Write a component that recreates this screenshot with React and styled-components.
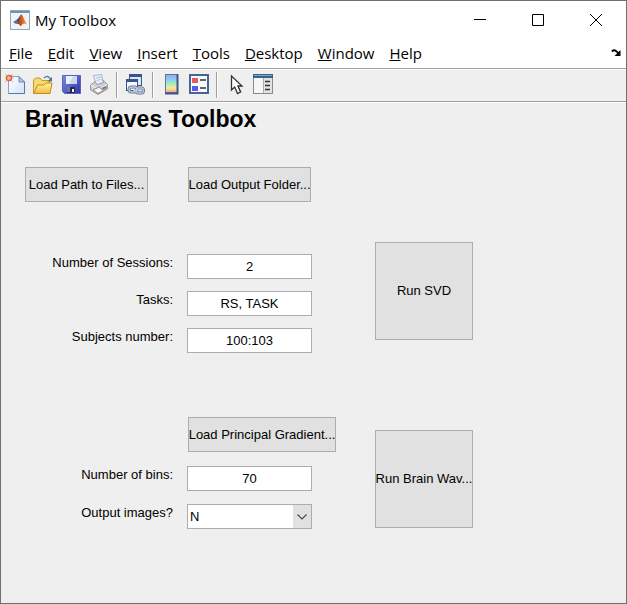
import React from "react";
import styled, { createGlobalStyle } from "styled-components";

const GlobalStyle = createGlobalStyle`
  *, *::before, *::after { box-sizing: border-box; }
  body { margin: 0; background: #efefef; }
`;

const Window = styled.div`
  display: flex;
  flex-direction: column;
  min-height: 100vh;
  border: 1px solid #707070;
  background: #efefef;
  color: #000;
  font: 13px/18px "Liberation Sans", Arial, sans-serif;
`;

const TitleBar = styled.header`
  display: flex;
  align-items: center;
  height: 37px;
  padding: 0 1px 0 9px;
  background: #fff;
`;

const TitleText = styled.span`
  flex: 1;
  padding-left: 5px;
  font: 15px/20px "Open Sans", sans-serif;
`;

const WindowButton = styled.button`
  display: flex;
  align-items: center;
  justify-content: center;
  width: 58px;
  height: 36px;
  padding: 0;
  border: 0;
  background: none;
`;

const MenuBar = styled.nav`
  display: flex;
  align-items: center;
  gap: 15px;
  height: 30px;
  padding: 0 4px 0 8px;
  background: #fff;
`;

const MenuButton = styled.button`
  padding: 0;
  border: 0;
  background: none;
  color: inherit;
  font: 15px/20px "Open Sans", sans-serif;

  &::first-letter {
    text-decoration: underline;
    text-decoration-thickness: 1px;
    text-underline-offset: 1px;
  }
`;

const DockButton = styled.button`
  display: flex;
  margin-left: auto;
  padding: 0;
  border: 0;
  background: none;
`;

const ToolBar = styled.div`
  display: flex;
  align-items: center;
  gap: 7px;
  height: 34px;
  padding: 0 4px;
  border-top: 1px solid #a0a0a0;
  border-bottom: 1px solid #a0a0a0;
  box-shadow: inset 0 1px #fff, 0 1px #fff;
`;

const ToolGroup = styled.div`
  display: flex;
  gap: 8px;
`;

const ToolButton = styled.button`
  display: flex;
  width: 20px;
  height: 22px;
  padding: 0;
  border: 0;
  background: none;
`;

const Separator = styled.div`
  width: 2px;
  height: 26px;
  border-left: 1px solid #a0a0a0;
  border-right: 1px solid #fff;
`;

const Content = styled.main`
  flex: 1;
  padding: 1px 24px 24px;
`;

const Heading = styled.h1`
  margin: 0;
  font-size: 23px;
  line-height: 32px;
`;

const ButtonRow = styled.div`
  display: flex;
  gap: 40px;
  margin-top: 32px;
`;

const PushButton = styled.button`
  display: flex;
  align-items: center;
  justify-content: center;
  width: ${(p) => p.$width}px;
  height: ${(p) => p.$height || 35}px;
  padding: 0;
  border: 1px solid #adadad;
  background: #e1e1e1;
  color: inherit;
  font: inherit;
  white-space: nowrap;
`;

const Section = styled.section`
  display: grid;
  grid-template-columns: 350px 98px;
  margin-top: ${(p) => p.$top}px;
`;

const Fields = styled.div`
  display: grid;
  grid-template-columns: 148px 125px;
  gap: ${(p) => p.$gap}px 14px;
  align-content: start;
  padding-top: ${(p) => p.$top}px;
`;

const Label = styled.label`
  text-align: right;
`;

const TextField = styled.input`
  width: 100%;
  height: 25px;
  padding: 0;
  border: 1px solid #abadb3;
  border-radius: 0;
  background: #fff;
  color: inherit;
  font: inherit;
  text-align: center;
`;

const SelectBox = styled.div`
  display: grid;
  grid-template-columns: 1fr 18px;
  height: 25px;
  border: 1px solid #adadad;
  background: #fff;
`;

const Select = styled.select`
  grid-area: 1 / 1 / 2 / 3;
  appearance: none;
  padding: 0 2px;
  border: 0;
  border-radius: 0;
  background: none;
  color: inherit;
  font: inherit;
`;

const SelectArrow = styled.span`
  grid-area: 1 / 2;
  display: flex;
  align-items: center;
  justify-content: center;
  background: #e1e1e1;
  pointer-events: none;
`;

const OffsetRow = styled.div`
  padding-left: 163px;
`;

const RunCell = styled.div`
  padding-top: ${(p) => p.$top}px;
`;

const Icon = ({ w = 20, h = 22, children }) => (
  <svg width={w} height={h} viewBox={`0 0 ${w} ${h}`} aria-hidden="true">
    {children}
  </svg>
);

const MatlabIcon = () => (
  <Icon h={20}>
    <defs>
      <linearGradient id="peak" x1="0" x2="1">
        <stop offset="0" stopColor="#7a2a14" />
        <stop offset=".45" stopColor="#d8521c" />
        <stop offset="1" stopColor="#f0a040" />
      </linearGradient>
    </defs>
    <rect x=".5" y=".5" width="19" height="19" fill="#f1f4f7" stroke="#96a3b1" />
    <rect x="1" y="1" width="18" height="2" fill="#6f94b8" />
    <path d="M3 12 L7 9.5 L9 11 L6 14Z" fill="#3b78b8" />
    <path d="M7 9.5 C9 8.5 10 4.5 11.5 4.5 L9.5 11 L8 13Z" fill="#235083" />
    <path d="M11.5 4.5 C13 5 14.5 11 17 14.5 C14.5 12.5 12.5 14 10.5 16.5 C9.5 14.5 8.5 13.5 6 14 C9 12 10 6 11.5 4.5Z" fill="url(#peak)" />
  </Icon>
);

const NewIcon = () => (
  <Icon>
    <defs>
      <linearGradient id="paper" x1="0" y1="0" x2="1" y2="1">
        <stop offset="0" stopColor="#fff" />
        <stop offset="1" stopColor="#cfe3fb" />
      </linearGradient>
    </defs>
    <path d="M3.5 2.5H14L19.5 8V19.5H3.5Z" fill="url(#paper)" stroke="#8ea3cb" />
    <path d="M19.5 8V19.5H3.5" fill="none" stroke="#5d76a6" />
    <path d="M14 2.5V8H19.5Z" fill="#adc9ee" stroke="#6f88b6" />
    <path d="M0 0L8 8M8 0L0 8M0 4H9" stroke="#eda384" />
    <circle cx="4" cy="4" r="2.5" fill="#fbc494" stroke="#db633c" strokeWidth="1.4" />
  </Icon>
);

const OpenIcon = () => (
  <Icon>
    <defs>
      <linearGradient id="folder" x1="0" y1="0" x2="0" y2="1">
        <stop offset="0" stopColor="#fff3a0" />
        <stop offset="1" stopColor="#efbd3e" />
      </linearGradient>
    </defs>
    <path d="M.5 19.5V6L2.5 4H7L9 6.5H16.5V19.5Z" fill="#f6da70" stroke="#c59a2c" />
    <path d="M.8 19.5L4.5 11H11L13 9H19L17 19.5Z" fill="url(#folder)" stroke="#c28c1b" />
    <path d="M11 4C13 1.5 16 2 17.5 5" fill="none" stroke="#6e8296" strokeWidth="1.5" />
    <path d="M19 3V7.5H14.5Z" fill="#586d84" />
  </Icon>
);

const SaveIcon = () => (
  <Icon>
    <defs>
      <linearGradient id="disk" x1="0" y1="0" x2="1" y2="1">
        <stop offset="0" stopColor="#7890e8" />
        <stop offset="1" stopColor="#3032a4" />
      </linearGradient>
    </defs>
    <path d="M1.5 1.5H19.5V19.5H3.5L1.5 17.5Z" fill="url(#disk)" stroke="#5a63b4" />
    <path d="M5 2H16V10H5Z" fill="#e9effc" />
    <path d="M12 2H16V10H8Z" fill="#c9d5f2" />
    <rect x="6" y="13" width="8" height="6" fill="#23275c" />
    <rect x="11" y="15" width="2" height="3" fill="#f1f4ff" />
    <rect x="6" y="13" width="3" height="5" fill="#6f77a8" />
  </Icon>
);

const PrintIcon = () => (
  <Icon>
    <path d="M4.5 1.5L12.5 .5L14.5 9L7.5 11.5Z" fill="#e8f2ff" stroke="#a3b5ca" />
    <path d="M7 4L12 3M7.5 6.5L12.5 5.5" stroke="#a8c3e8" />
    <path d="M1.5 11L6 7.5L8 10.5L14.5 8.5L14 6L18.5 10.5V15L9 20.5L1.5 16Z" fill="#cfcfcf" stroke="#9c9c9c" />
    <path d="M2 11.5L9 15L18 11" fill="none" stroke="#f5f5f5" />
    <path d="M9 15V20L18 15V11.5Z" fill="#ababab" />
    <path d="M4 16L10 13L14.5 16.5L9 19.5Z" fill="#f7f7f7" stroke="#8b8b8b" />
    <path d="M14 14.5L17 13.2" stroke="#727272" strokeWidth="1.4" />
  </Icon>
);

const LinkIcon = () => (
  <Icon>
    <rect x="4.5" y="1.5" width="12" height="10" fill="#dbe7f7" stroke="#39558f" />
    <rect x="4" y="0" width="13" height="3" fill="#36558f" />
    <rect x="1.5" y="6.5" width="11" height="10" fill="#f5f9ff" stroke="#39558f" />
    <rect x="1" y="5" width="12" height="3" fill="#36558f" />
    <g fill="none">
      <rect x="4" y="13" width="8" height="5" rx="2.5" stroke="#5f7389" strokeWidth="3" />
      <rect x="11" y="14" width="7.5" height="5" rx="2.5" stroke="#5f7389" strokeWidth="3" />
      <rect x="4" y="13" width="8" height="5" rx="2.5" stroke="#bccbdc" strokeWidth="1.3" />
      <rect x="11" y="14" width="7.5" height="5" rx="2.5" stroke="#bccbdc" strokeWidth="1.3" />
      <path d="M8 16.2H15" stroke="#bccbdc" strokeWidth="1.5" />
    </g>
  </Icon>
);

const ColorbarIcon = () => (
  <Icon>
    <defs>
      <linearGradient id="spectrum" x1="0" y1="0" x2="0" y2="1">
        <stop offset="0" stopColor="#a3a1ec" />
        <stop offset=".3" stopColor="#83d4ef" />
        <stop offset=".55" stopColor="#b0edb5" />
        <stop offset=".75" stopColor="#f6e995" />
        <stop offset="1" stopColor="#f2a48c" />
      </linearGradient>
    </defs>
    <rect x="4.5" y=".5" width="12" height="18" fill="url(#spectrum)" stroke="#5c75a5" />
    <path d="M16.5 0V19.5H4" fill="none" stroke="#405786" strokeWidth="2" />
  </Icon>
);

const LegendIcon = () => (
  <Icon>
    <rect x="1" y="1" width="18" height="18" fill="#f6f9ff" stroke="#4b6294" strokeWidth="2" />
    <rect x="3" y="4" width="6" height="5" fill="#e75a5a" />
    <rect x="3" y="12" width="6" height="5" fill="#5b5be2" />
    <path d="M11 6H17M11 14H17" stroke="#333" strokeWidth="1.5" />
  </Icon>
);

const PointerIcon = () => (
  <Icon>
    <path d="M6.5 2V16L9.7 13L12.5 19.5L15.5 18L13 12H17Z" fill="#fff" stroke="#333" strokeWidth="1.3" />
    <path d="M13 12L16 18L13 19" fill="none" stroke="#222" strokeDasharray="1 1" />
  </Icon>
);

const InspectorIcon = () => (
  <Icon>
    <rect x=".5" y=".5" width="19" height="19" fill="#e2e2e2" stroke="#8b8b8b" />
    <rect x="0" y="0" width="20" height="4" fill="#396486" />
    <path d="M1 1.5H19" stroke="#7fa7c4" />
    <rect x="1" y="4" width="9" height="15" fill="#f6f6f6" />
    <path d="M10.5 4V19" stroke="#aaa" />
    <path d="M12 7.5H17M12 11.5H17M12 15.5H17" stroke="#333" strokeWidth="1.4" />
  </Icon>
);

const toolGroups = [
  [["New Figure", NewIcon], ["Open File", OpenIcon], ["Save Figure", SaveIcon], ["Print Figure", PrintIcon]],
  [["Link Plot", LinkIcon]],
  [["Insert Colorbar", ColorbarIcon], ["Insert Legend", LegendIcon]],
  [["Edit Plot", PointerIcon], ["Open Property Inspector", InspectorIcon]],
];

const menus = ["File", "Edit", "View", "Insert", "Tools", "Desktop", "Window", "Help"];

const controls = [
  ["Minimize", "M0 5.5H12"],
  ["Maximize", "M.5 .5H11.5V11.5H.5Z"],
  ["Close", "M0 0L12 12M12 0L0 12"],
];

const Field = ({ id, label, value }) => (
  <>
    <Label htmlFor={id}>{label}</Label>
    <TextField id={id} defaultValue={value} />
  </>
);

export default function App() {
  return (
    <>
      <GlobalStyle />
      <Window>
        <TitleBar>
          <MatlabIcon />
          <TitleText>My Toolbox</TitleText>
          {controls.map(([name, d]) => (
            <WindowButton key={name} aria-label={name}>
              <Icon w={12} h={12}>
                <path d={d} fill="none" stroke="#000" />
              </Icon>
            </WindowButton>
          ))}
        </TitleBar>
        <MenuBar>
          {menus.map((m) => (
            <MenuButton key={m}>{m}</MenuButton>
          ))}
          <DockButton aria-label="Dock">
            <Icon w={11} h={8}>
              <path d="M1 2.5C3 .5 5 1 7.5 4.5" fill="none" stroke="#000" strokeWidth="2" />
              <path d="M9.5 1V7H3.5Z" />
            </Icon>
          </DockButton>
        </MenuBar>
        <ToolBar role="toolbar">
          {toolGroups.map((group, i) => (
            <React.Fragment key={i}>
              {i > 0 && <Separator />}
              <ToolGroup>
                {group.map(([name, Glyph]) => (
                  <ToolButton key={name} aria-label={name}>
                    <Glyph />
                  </ToolButton>
                ))}
              </ToolGroup>
            </React.Fragment>
          ))}
        </ToolBar>
        <Content>
          <Heading>Brain Waves Toolbox</Heading>
          <ButtonRow>
            <PushButton $width={123}>Load Path to Files...</PushButton>
            <PushButton $width={123}>Load Output Folder...</PushButton>
          </ButtonRow>
          <Section $top={40}>
            <Fields $top={12} $gap={12}>
              <Field id="sessions" label="Number of Sessions:" value="2" />
              <Field id="tasks" label="Tasks:" value="RS, TASK" />
              <Field id="subjects" label="Subjects number:" value="100:103" />
            </Fields>
            <PushButton $width={98} $height={98}>Run SVD</PushButton>
          </Section>
          <Section $top={64}>
            <div>
              <OffsetRow>
                <PushButton $width={148}>Load Principal Gradient...</PushButton>
              </OffsetRow>
              <Fields $top={14} $gap={13}>
                <Field id="bins" label="Number of bins:" value="70" />
                <Label htmlFor="images">Output images?</Label>
                <SelectBox>
                  <Select id="images" defaultValue="N">
                    <option>N</option>
                    <option>Y</option>
                  </Select>
                  <SelectArrow>
                    <Icon w={10} h={6}>
                      <path d="M.5 .5L5 5L9.5 .5" fill="none" stroke="#444" strokeWidth="1.1" />
                    </Icon>
                  </SelectArrow>
                </SelectBox>
              </Fields>
            </div>
            <RunCell $top={13}>
              <PushButton $width={98} $height={98}>Run Brain Wav...</PushButton>
            </RunCell>
          </Section>
        </Content>
      </Window>
    </>
  );
}
